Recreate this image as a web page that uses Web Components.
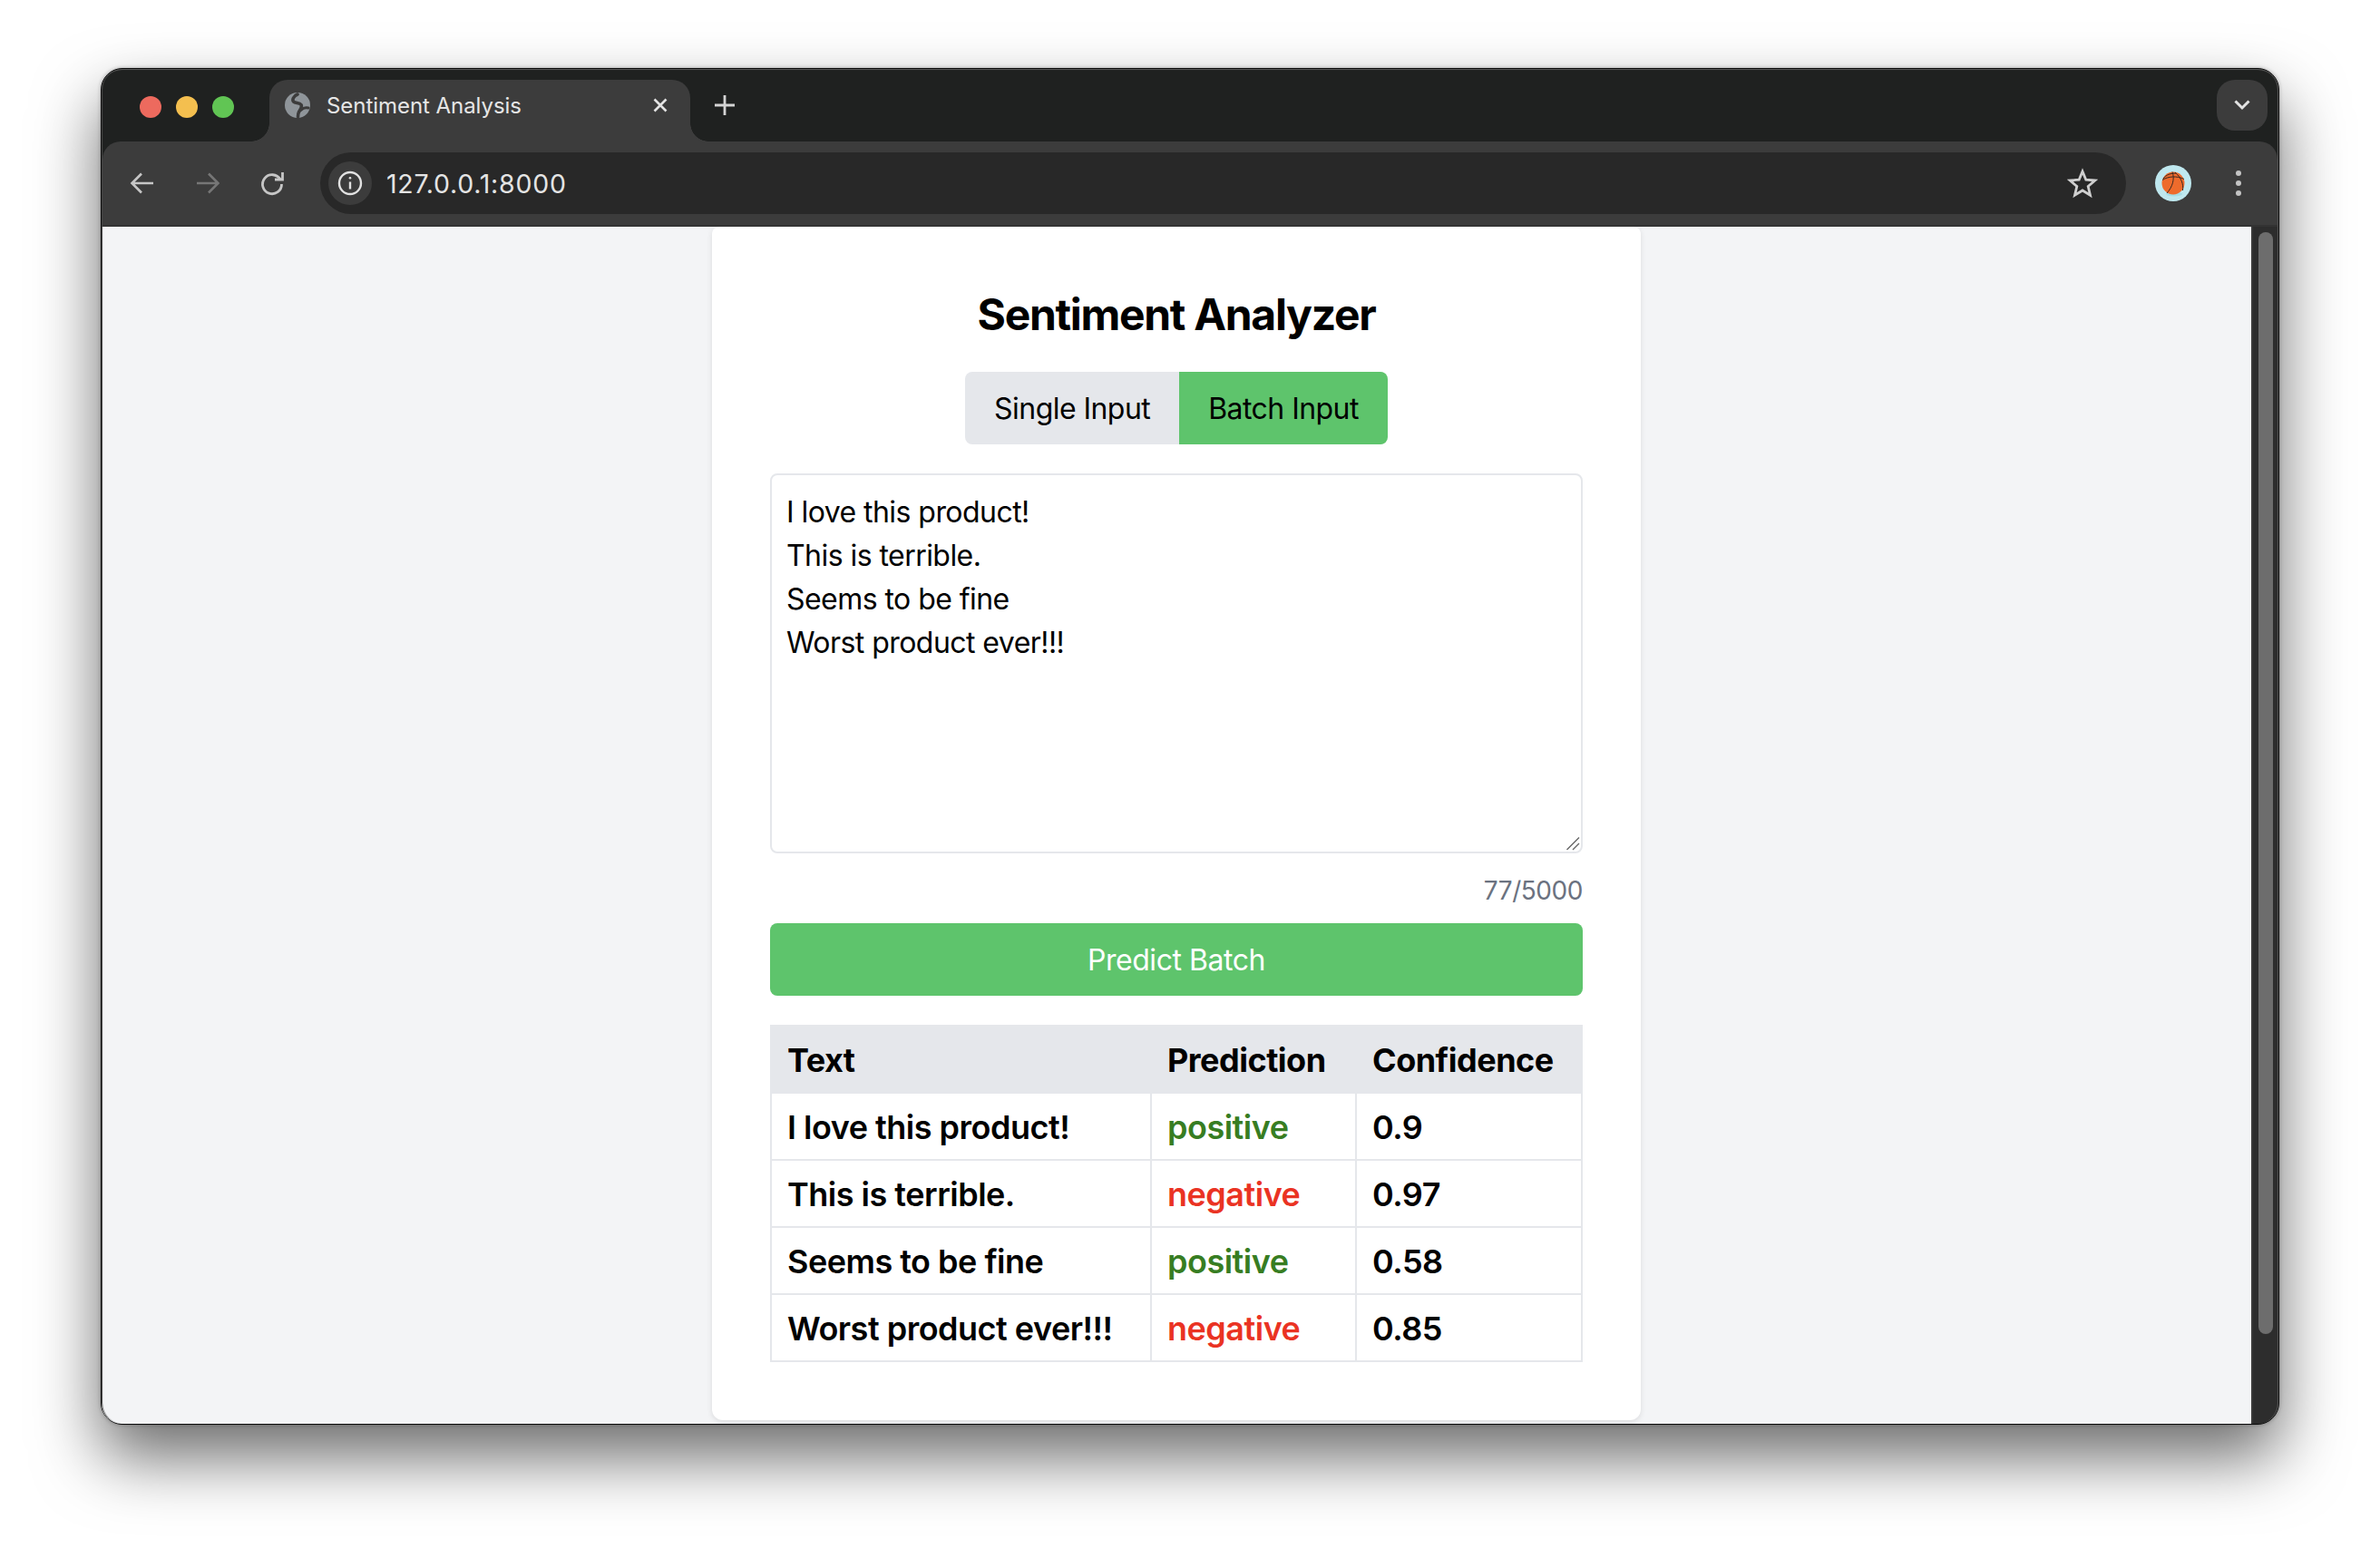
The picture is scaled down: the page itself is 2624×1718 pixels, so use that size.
<!DOCTYPE html>
<html><head><meta charset="utf-8">
<style>
html,body{margin:0;background:#fff;height:100%;overflow:hidden}
body{padding:75px 111px 0;box-sizing:border-box;font-family:Inter,"Liberation Sans",sans-serif}
</style></head><body>
<browser-window>
  <sentiment-card></sentiment-card>
</browser-window>

<template id="t-window">
<style>
:host{display:flex;flex-direction:column;width:2402px;height:1496px;box-sizing:border-box;border:1px solid #0b0b0b;border-radius:24px;background:#1f2120;box-shadow:0 36px 72px rgba(0,0,0,.58),0 0 4px rgba(0,0,0,.3);position:relative}
.shine{position:absolute;inset:0;border-radius:23px;box-shadow:inset 0 2px 1px -1px #5c5c5c,inset 2px 0 1px -1px #484848,inset -2px 0 1px -1px #555;pointer-events:none;z-index:5}
.tabbar{flex:none;height:80px;display:flex;align-items:flex-end;padding-left:185px;padding-right:12px;box-sizing:border-box;border-radius:23px 23px 0 0}
.lights{position:absolute;left:42px;top:30px;display:flex;gap:16px}
.lights i{width:24px;height:24px;border-radius:50%;display:block}
.plus{width:40px;height:40px;margin:0 0 20px 18px;display:flex}
.grow{flex:1}
.chev{width:56px;height:56px;border-radius:20px;background:#3c3c3c;margin-bottom:12px;display:flex;align-items:center;justify-content:center}
.toolbar{flex:none;height:94px;box-sizing:border-box;background:#3c3c3c;border-radius:20px 20px 0 0;border-bottom:2px solid #333;display:flex;align-items:center;margin:0 1px 0 1px}
.nav{width:72px;display:flex;justify-content:center;flex:none}
.nav.a{margin-left:8px}
.omni{flex:1;height:68px;margin-left:16px;background:#282828;border-radius:34px;display:flex;align-items:center;padding:0 31px 0 9px;color:#e4e4e4;font-size:28.5px}
.chip{width:48px;height:48px;border-radius:50%;background:#3c3c3c;display:flex;align-items:center;justify-content:center;flex:none;margin-right:16px}
.url{flex:1;letter-spacing:.75px}
.avatar{margin-left:32px;width:40px;height:40px;flex:none}
.dots{margin-left:49px;margin-right:40px;width:6px;height:28px;flex:none}
.main{flex:1;display:flex;min-height:0;overflow:hidden;border-radius:0 0 22px 22px;margin:0}
.page{flex:1;background:#f3f4f6;display:flex;justify-content:center;align-items:flex-start;min-width:0}
.scroll{flex:none;width:30px;background:#2d2d2d;box-sizing:border-box;border-left:2px solid #3a3a3a;padding:6px 6px 0 6px}
.thumb{width:16px;height:1215px;border-radius:8px;background:#6d6d6d}
</style>
<div class="shine"></div>
<div class="lights"><i style="background:#ed6a5e"></i><i style="background:#f4bf4f"></i><i style="background:#61c554"></i></div>
<div class="tabbar">
  <browser-tab>Sentiment Analysis</browser-tab>
  <div class="plus"><svg width="40" height="40" viewBox="0 0 40 40" fill="none" stroke="#d4d4d4" stroke-width="2.8"><path d="M20 9v22M9 20h22"/></svg></div>
  <div class="grow"></div>
  <div class="chev"><svg width="24" height="16" viewBox="0 0 24 16" fill="none" stroke="#e3e3e3" stroke-width="3"><path d="M4.500 3.500 12 11l7.500-7.500"/></svg></div>
</div>
<div class="toolbar">
  <div class="nav a"><svg width="32" height="32" viewBox="0 0 32 32" fill="none" stroke="#c6c6c6" stroke-width="2.6"><path d="M28 16H5M15 5.500 4.500 16 15 26.500"/></svg></div>
  <div class="nav"><svg width="32" height="32" viewBox="0 0 32 32" fill="none" stroke="#767676" stroke-width="2.6"><path d="M4 16h23M17 5.500 27.500 16 17 26.500"/></svg></div>
  <div class="nav"><svg width="32" height="32" viewBox="0 0 32 32" fill="none" stroke="#c6c6c6" stroke-width="2.8"><path d="M24 11.800A10.500 10.500 0 1 0 25.500 17"/><path d="M26.500 4v8H18"/></svg></div>
  <div class="omni">
    <div class="chip"><svg width="30" height="30" viewBox="0 0 30 30" fill="none" stroke="#e2e2e2" stroke-width="2.400"><circle cx="15" cy="15" r="12"/><path d="M15 13.500v8"/><circle cx="15" cy="9.300" r="1.300" fill="#e2e2e2" stroke="none"/></svg></div>
    <span class="url">127.0.0.1:8000</span>
    <svg width="34" height="34" viewBox="0 0 34 34" fill="none" stroke="#cfcfcf" stroke-width="2.800"><path d="M17 4 20.800 13.200l10 .8-7.600 6.500 2.300 9.700L17 25l-8.500 5.200 2.300-9.700L3.200 14l10-.8z"/></svg>
  </div>
  <div class="avatar"><svg width="40" height="40" viewBox="0 0 40 40"><circle cx="20" cy="20" r="20" fill="#bfe8ef"/><ellipse cx="21" cy="32" rx="9" ry="2.500" fill="#a6dde6"/><circle cx="20" cy="20" r="12.500" fill="#ee6b2c"/><g fill="none" stroke="#3a2a22" stroke-width="1"><path d="M8 16.500c6-4 16-5 24-1M19 7.500c3 8 0 17-6 23.500M22 8c7 6 9.500 13 8.500 20M9 15c3-4.500 9-6 14-6"/></g></svg></div>
  <div class="dots"><svg width="6" height="28" viewBox="0 0 6 28" fill="#c4c4c4"><circle cx="3" cy="3" r="3"/><circle cx="3" cy="14" r="3"/><circle cx="3" cy="25" r="3"/></svg></div>
</div>
<div class="main">
  <div class="page"><slot></slot></div>
  <div class="scroll"><div class="thumb"></div></div>
</div>
</template>

<template id="t-tab">
<style>
:host{display:flex;align-items:center;position:relative;width:464px;height:68px;box-sizing:border-box;background:#3c3c3c;border-radius:20px 20px 0 0;padding:0 19px 12px 17px;color:#e6e6e6;font-size:24px;letter-spacing:-.05px;flex:none}
:host::before,:host::after{content:"";position:absolute;bottom:0;width:20px;height:20px}
:host::before{left:-20px;background:radial-gradient(circle at 0 0,transparent 19.500px,#3c3c3c 20px)}
:host::after{right:-20px;background:radial-gradient(circle at 100% 0,transparent 19.500px,#3c3c3c 20px)}
svg.g{flex:none;margin-right:18px}
.t{flex:1;white-space:nowrap}
</style>
<svg class="g" width="28" height="28" viewBox="0 0 28 28"><circle cx="14" cy="14" r="14" fill="#8f959a"/><g fill="none" stroke="#3c3c3c" stroke-linecap="round"><path stroke-width="3.600" d="M14 2C9.500 4 8 8 9.500 10 11.500 12 16 11 18 13.500 19.500 16 17 19 15.500 21.500 14.500 23.500 14.500 25 14.500 26.500"/><path stroke-width="3.200" d="M18 19c2.500-2.500 5.500-2.500 8-2"/></g></svg>
<span class="t"><slot></slot></span>
<svg width="28" height="28" viewBox="0 0 28 28" fill="none" stroke="#e4e4e4" stroke-width="2.600"><path d="M7.500 7.500l13 13M20.500 7.500l-13 13"/></svg>
</template>

<template id="t-card">
<style>
:host{display:block;width:1024px;height:1316px;box-sizing:border-box;background:#fff;border-radius:8px 8px 12px 12px;box-shadow:0 2px 6px rgba(0,0,0,.1);padding:64px 64px 0;color:#000;font-size:32px;line-height:48px;letter-spacing:-.55px}
h1{margin:0 0 32px;font-size:48px;line-height:64px;font-weight:700;text-align:center;letter-spacing:-1.3px;position:relative;top:1px}
.tabs{display:flex;justify-content:center;margin-bottom:32px;height:80px}
.tabs span{display:block;padding:17px 32px 15px;line-height:48px}
.tabs .s{background:#e5e7eb;border-radius:8px 0 0 8px}
.tabs .b{background:#5ec46c;border-radius:0 8px 8px 0}
.area{position:relative;box-sizing:border-box;height:419px;border:2px solid #e5e7eb;border-radius:8px;padding:17px 16px 15px}
.area div{white-space:nowrap}
.grip{position:absolute;right:1px;bottom:1px}
.count{margin-top:21px;margin-bottom:16px;font-size:28px;line-height:40px;text-align:right;color:#6b7280;letter-spacing:-.45px}
.go{display:block;height:80px;line-height:48px;padding:17px 16px 15px;box-sizing:border-box;border-radius:8px;background:#5ec46c;color:#fff;text-align:center;margin-bottom:32px;letter-spacing:-.45px}
table{border-collapse:collapse;width:896px;table-layout:fixed;font-weight:600;font-size:36px;letter-spacing:-.5px}
th,td{border:2px solid #e5e7eb;padding:13px 16px 11px 17px;text-align:left;line-height:48px;height:72px;box-sizing:border-box;white-space:nowrap}
th{background:#e5e7eb;font-weight:700}
.p{color:#377d22}.n{color:#ea3323}
</style>
<h1>Sentiment Analyzer</h1>
<div class="tabs"><span class="s">Single Input</span><span class="b">Batch Input</span></div>
<div class="area"><div>I love this product!</div><div>This is terrible.</div><div>Seems to be fine</div><div>Worst product ever!!!</div>
<svg class="grip" width="16" height="16" viewBox="0 0 16 16" fill="none" stroke="#666" stroke-width="1.400"><path d="M1.500 15 15 1.500M8 15 15 8"/></svg></div>
<div class="count">77/5000</div>
<div class="go">Predict Batch</div>
<table>
<colgroup><col style="width:419px"><col style="width:226px"><col style="width:249px"></colgroup>
<thead><tr><th>Text</th><th>Prediction</th><th>Confidence</th></tr></thead>
<tbody>
<tr><td>I love this product!</td><td class="p">positive</td><td>0.9</td></tr>
<tr><td>This is terrible.</td><td class="n">negative</td><td>0.97</td></tr>
<tr><td>Seems to be fine</td><td class="p">positive</td><td>0.58</td></tr>
<tr><td>Worst product ever!!!</td><td class="n">negative</td><td>0.85</td></tr>
</tbody></table>
</template>

<script>
function def(name,id){customElements.define(name,class extends HTMLElement{constructor(){super();this.attachShadow({mode:"open"}).appendChild(document.getElementById(id).content.cloneNode(true));}});}
def("browser-tab","t-tab");
def("sentiment-card","t-card");
def("browser-window","t-window");
</script>
</body></html>
